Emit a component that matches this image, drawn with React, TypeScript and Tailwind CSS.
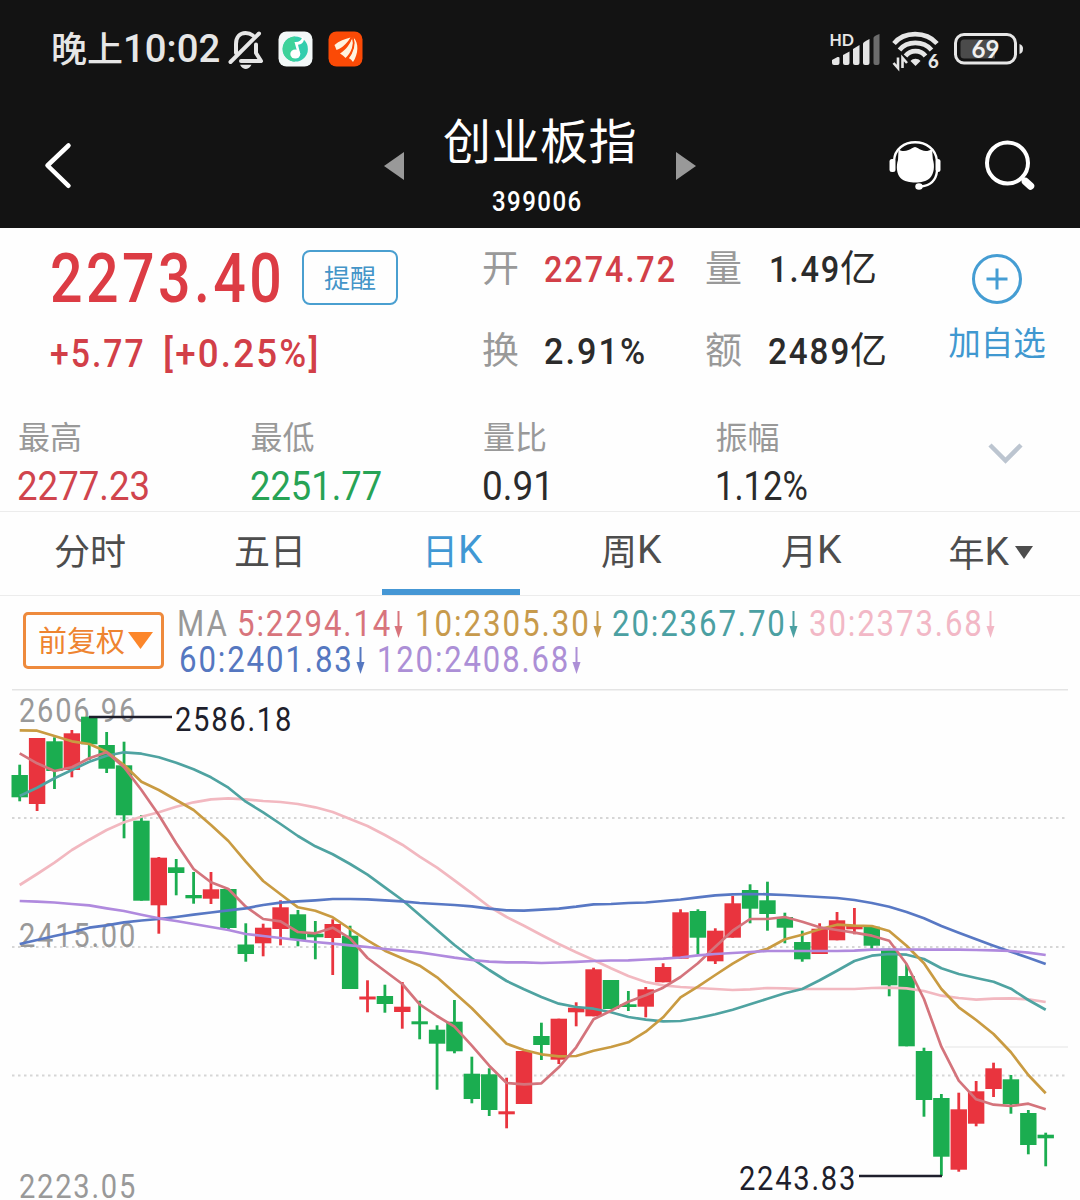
import { useLayoutEffect, useRef, useState } from 'react'
import type { ReactNode } from 'react'

function Fit({ w, className = '', children }: { w: number; className?: string; children: ReactNode }) {
  const ref = useRef<HTMLSpanElement>(null)
  const [scale, setScale] = useState(1)
  useLayoutEffect(() => {
    if (ref.current) setScale(w / ref.current.offsetWidth)
  }, [w])
  return (
    <span className={`block shrink-0 ${className}`} style={{ width: w }}>
      <span ref={ref} className="inline-block origin-left whitespace-pre" style={{ transform: `scaleX(${scale})` }}>
        {children}
      </span>
    </span>
  )
}

const ROBOTO = "font-['Roboto','Noto_Sans_CJK_SC',sans-serif]"
const DIN = "tracking-[0.06em] font-['Roboto','Noto_Sans_CJK_SC',sans-serif]"

function StatusBar() {
  return (
    <div className="flex h-[98px] items-center pl-[51px] text-[#e6e6e6]">
      <Fit w={72} className="mb-[4px] text-[35px] leading-[94px] font-medium">晚上</Fit>
      <Fit w={97} className={`text-[39.500px] leading-[98px] ${ROBOTO} font-medium`}>10:02</Fit>
      <svg className="ml-[8px]" width="36" height="40" viewBox="0 0 36 40" fill="none" stroke="#e6e6e6" strokeWidth="4" strokeLinecap="round" strokeLinejoin="round">
        <path d="M2.500 33 L31 4.500" />
        <path d="M8 24 V15 C8 8 12 4 17.500 4 C20.500 4 23 5 25 6.500" />
        <path d="M28 15.500 V24 L33 32 H13" />
        <path d="M12 35.800 H23.500 C22 39 19.500 40 17.700 40 C16 40 13.500 39 12 35.800 Z" fill="#e6e6e6" stroke="none" />
      </svg>
      <svg className="ml-[14px]" width="35" height="36" viewBox="0 0 35 36">
        <rect x="0.500" y="0.500" width="34" height="35" rx="8" fill="#f3f8f8" />
        <circle cx="17.300" cy="18" r="12.600" fill="#32cdae" />
        <path d="M17 5.500 A12.600 12.600 0 0 0 6 24 C9 28.500 13 30.500 17 30.500 Z" fill="#3dd29a" />
        <ellipse cx="17.300" cy="23" rx="5" ry="4.500" fill="#fff" />
        <path d="M19.800 23 L16.500 11 C20.500 11.500 23.500 9.500 24.500 5.500 L26 8 C25.800 11.500 23.500 13.500 20 13.800 L22.300 23 Z" fill="#fff" />
      </svg>
      <svg className="ml-[15px]" width="35" height="36" viewBox="0 0 35 36">
        <rect x="0.500" y="0.500" width="34" height="35" rx="8" fill="#fb4a06" />
        <path d="M6.500 14 C11 10 17 8 22.500 6.500 C20 11 15 16.500 8.500 19 Z" fill="#fff3df" />
        <path d="M12 22.500 C18 18.500 22.500 13 24 6.500 C26.500 14 23 22 17.500 27 C16 25.500 14 23.500 12 22.500 Z" fill="#fff3df" />
        <path d="M20.500 27 C25 21 27.500 13.500 25.500 6.500 C31 12 30.500 23 25 31 C24 29.500 22.500 28 20.500 27 Z" fill="#fff3df" />
        <path d="M9 21 C16 17.800 21 12.500 23.500 7 M19.500 28 C25 21 27 13.500 25 7" stroke="#fb4a06" strokeWidth="1.500" fill="none" />
      </svg>
      <svg className="ml-[466px] overflow-visible" width="51" height="38" viewBox="0 0 51 38">
        <text x="0.500" y="15.500" fontFamily="Lato, sans-serif" fontWeight="700" fontSize="17.500" textLength="24.500" lengthAdjust="spacingAndGlyphs" fill="#e6e6e6">HD</text>
        <g fill="#e6e6e6">
          <path d="M3 30 L8.500 27 Q10.500 26.500 10.500 28 V33 Q10.500 35 8.500 35 H5 Q3 35 3 33 Z" />
          <path d="M14 25 L20.500 21.500 V33 Q20.500 35 18.500 35 H16 Q14 35 14 33 Z" />
          <path d="M24 19 L30.500 15 V33 Q30.500 35 28.500 35 H26 Q24 35 24 33 Z" />
          <path d="M34 13.500 Q34 12 40.500 9 V33 Q40.500 35 38.500 35 H36 Q34 35 34 33 Z" />
        </g>
        <path d="M44.500 8 Q44.500 6 50.500 4 V33 Q50.500 35 48.500 35 H46.500 Q44.500 35 44.500 33 Z" fill="#6c6c6c" />
      </svg>
      <svg className="ml-[12px] overflow-visible" width="48" height="38" viewBox="0 0 48 38" fill="none" stroke="#e6e6e6" strokeWidth="4.600">
        <path d="M2 13.500 C12 1 34 1 45 13.500" />
        <path d="M7.500 20 C15 10.500 31.500 10.500 39.500 20" />
        <path d="M13.500 26 C18.500 19.500 28.500 19.500 33.500 26" />
        <path d="M18.500 31 C21 28 26 28 28.500 31 L23.500 36 Z" fill="#e6e6e6" stroke="none" />
        <path d="M6 27.500 V38 L1.500 33 M10.500 38 V28 L15 33" strokeWidth="2.600" />
        <text x="36" y="38" fontFamily="Lato, sans-serif" fontWeight="900" fontSize="18.500" fill="#e6e6e6" stroke="none">6</text>
      </svg>
      <svg className="ml-[14px]" width="72" height="32" viewBox="0 0 72 32">
        <rect x="1.500" y="1.500" width="60" height="28.500" rx="8.500" fill="none" stroke="#e6e6e6" strokeWidth="3" />
        <path d="M10 6.500 H41 V25.500 H10 Q6.500 25.500 6.500 22 V10 Q6.500 6.500 10 6.500 Z" fill="#4b4b4b" />
        <path d="M65.500 11 Q69 12 69 15.500 Q69 20 65.500 21 Z" fill="#e6e6e6" />
        <text x="17.500" y="24.500" fontFamily="Lato, sans-serif" fontWeight="700" fontSize="24" textLength="28" lengthAdjust="spacingAndGlyphs" fill="#f0f0f0">69</text>
      </svg>
    </div>
  )
}

function TitleBar() {
  return (
    <div className="flex h-[130px] items-start text-white">
      <svg className="mt-[43px] ml-[43px]" width="30" height="50" viewBox="0 0 30 50" fill="none" stroke="#fff" strokeWidth="4.500" strokeLinecap="round" strokeLinejoin="round">
        <path d="M25.500 4.500 L4.500 24.500 L25.500 44.800" />
      </svg>
      <svg className="mt-[54px] ml-[311px]" width="20" height="28" viewBox="0 0 20 28"><path d="M0 14 L20 0 V28 Z" fill="#999" /></svg>
      <div className="ml-[38px] flex w-[196px] flex-col items-center">
        <h1 className="mt-[7px] h-[75px] text-[48px] leading-[66px] font-normal tracking-[0.5px] whitespace-nowrap">创业板指</h1>
        <Fit w={91} className={`mr-[5px] text-[28px] leading-[44px] font-medium ${DIN}`}>399006</Fit>
      </div>
      <svg className="mt-[54px] ml-[38px]" width="20" height="28" viewBox="0 0 20 28"><path d="M20 14 L0 0 V28 Z" fill="#999" /></svg>
      <svg className="mt-[41px] ml-[192px]" width="54" height="54" viewBox="0 0 54 54">
        <path d="M6 22 C7 -3 47 -3 49 22" fill="none" stroke="#fff" strokeWidth="2.400" />
        <path d="M49 32 C48 42 42 46.500 33 47.500" fill="none" stroke="#fff" strokeWidth="2.400" />
        <rect x="1.500" y="20" width="6" height="13" rx="2.500" fill="#fff" />
        <rect x="47.500" y="20" width="5" height="13" rx="2.500" fill="#fff" />
        <ellipse cx="31" cy="47.500" rx="3.700" ry="3.200" fill="#fff" />
        <path d="M10.500 10.500 C14 12.500 17 12.500 20.500 11 C23 10.500 25 8 27 8 C29 8 31 10.500 33.500 11 C37 12.500 40 12.500 44 10 L44.800 20 C47 27 46 35 42 39 C38 42.500 33 43.500 27.500 43.500 C22 43.500 16 42.500 12.500 39 C8.500 34.500 8 27 10 21 Z" fill="#fff" />
      </svg>
      <svg className="mt-[41px] ml-[41px]" width="54" height="54" viewBox="0 0 54 54" fill="none" stroke="#fff">
        <circle cx="24.500" cy="24" r="20.500" strokeWidth="4" />
        <path d="M39 39 L42 42" strokeWidth="4" />
        <path d="M42.500 42.500 L47.500 47" strokeWidth="7.500" strokeLinecap="round" />
      </svg>
    </div>
  )
}

function QuotePair({ label, children }: { label: string; children: ReactNode }) {
  return (
    <div className="flex h-[82px] items-center text-[#2b2b2b]">
      <span className="mb-[4px] w-[62px] text-[37px] text-[#999]">{label}</span>
      {children}
    </div>
  )
}

function Quote() {
  return (
    <div className="flex h-[170px]">
      <div className="w-[482px] pl-[50px] text-[#dc3c44]">
        <div className="flex h-[102px] items-center">
          <Fit w={235} className={`text-[69px] leading-[102px] font-medium ${DIN}`}>2273.40</Fit>
          <div className="mb-[4px] ml-[17px] flex h-[55px] w-[96px] items-center justify-center rounded-[8px] border-[2.5px] border-[#4a9fd0] pb-[2px] text-[26px] text-[#4495c8]">
            提醒
          </div>
        </div>
        <div className={`flex h-[46px] items-center pt-[2px] text-[39px] leading-[46px] font-medium text-[#d23f48] ${DIN}`}>
          <Fit w={96}>+5.77</Fit>
          <Fit w={158} className="ml-[17px]">[+0.25%]</Fit>
        </div>
      </div>
      <div className="w-[223px]">
        <QuotePair label="开"><Fit w={133} className={`text-[37.500px] font-medium text-[#d23f48] ${DIN}`}>2274.72</Fit></QuotePair>
        <QuotePair label="换"><Fit w={103} className={`text-[37.500px] font-medium ${DIN}`}>2.91%</Fit></QuotePair>
      </div>
      <div className="w-[242px]">
        <QuotePair label="量">
          <Fit w={72} className={`pl-[2px] text-[37.500px] font-medium ${DIN}`}>1.49</Fit>
          <span className="mb-[4px] ml-[1px] text-[37px]">亿</span>
        </QuotePair>
        <QuotePair label="额">
          <Fit w={83} className={`pl-px text-[37.500px] font-medium ${DIN}`}>2489</Fit>
          <span className="mb-[4px] text-[37px]">亿</span>
        </QuotePair>
      </div>
      <div className="flex w-[100px] flex-col items-center pt-[25px] text-[#4098d0]">
        <svg width="52" height="52" viewBox="0 0 52 52" fill="none" stroke="#459dd3" strokeWidth="3">
          <circle cx="26" cy="26" r="23.500" />
          <path d="M26 15.500 V36.500 M15.500 26 H36.500" />
        </svg>
        <span className="mt-[13px] text-[32.500px] leading-[46px] whitespace-nowrap">加自选</span>
      </div>
    </div>
  )
}

const STATS = [
  { label: '最高', value: '2277.23', w: 133, tone: 'text-[#d0444d]' },
  { label: '最低', value: '2251.77', w: 132, tone: 'text-[#27a355]' },
  { label: '量比', value: '0.91', w: 72, tone: 'text-[#2b2b2b]' },
  { label: '振幅', value: '1.12%', w: 93, tone: 'text-[#2b2b2b]' },
]

function Stats() {
  return (
    <div className="flex h-[113px] pt-[12px] pl-[17px]">
      {STATS.map((s) => (
        <div key={s.label} className="w-[232.500px]">
          <div className="h-[50px] pl-px text-[32px] leading-[50px] text-[#999]">{s.label}</div>
          <Fit w={s.w} className={`text-[41px] leading-[52px] ${ROBOTO} ${s.tone}`}>{s.value}</Fit>
        </div>
      ))}
      <svg className="mt-[33px] ml-[41px]" width="36" height="22" viewBox="0 0 36 22" fill="none" stroke="#bcc5d0" strokeWidth="4.500">
        <path d="M2 2 L17.500 17.500 L33 2" />
      </svg>
    </div>
  )
}

function Tabs() {
  const k = <Fit w={24} className={`pt-[3px] text-[39px] ${ROBOTO}`}>K</Fit>
  const base = 'relative flex w-[180px] items-center justify-center pb-[9px] text-[36px]'
  return (
    <div className="flex h-[85px] border-y border-[#ececec] text-[#4d4d4d]">
      <div className={base}>分时</div>
      <div className={base}>五日</div>
      <div className={`${base} pl-[4px] text-[#4098d4]`}>
        日{k}
        <div className="absolute bottom-0 left-[21.500px] h-[6px] w-[138px] bg-[#4597d5]" />
      </div>
      <div className={`${base} pl-[2px]`}>周{k}</div>
      <div className={`${base} pl-[2px]`}>月{k}</div>
      <div className="flex w-[180px] items-center justify-center pb-[5px] pl-px text-[36px]">
        年{k}
        <svg className="mt-[3px] ml-[6px]" width="18" height="13" viewBox="0 0 18 13"><path d="M0 0 H18 L9 13 Z" fill="#4d4d4d" /></svg>
      </div>
    </div>
  )
}

function Average({ text, w, tone, gap }: { text: string; w: number; tone: string; gap: string }) {
  return (
    <div className={`flex items-center ${tone} ${gap}`}>
      <Fit w={w}>{text}</Fit>
      <svg className="ml-[2px]" width="9" height="27" viewBox="0 0 9 27">
        <path d="M4.500 0 V18" stroke="currentColor" strokeWidth="2" />
        <path d="M0.500 15 H8.500 L4.500 27 Z" fill="currentColor" />
      </svg>
    </div>
  )
}

function AverageBar() {
  return (
    <div className="flex h-[93px] pl-[23px]">
      <div className="mt-[16px] flex h-[57px] w-[141px] items-center rounded-[5px] border-[3px] border-[#ee8a3c] pb-px pl-[12px] text-[29px] text-[#ee8430]">
        前复权
        <svg className="ml-[3px]" width="25" height="17" viewBox="0 0 25 17"><path d="M0 0 H25 L12.500 17 Z" fill="#fc862a" /></svg>
      </div>
      <div className={`ml-[13px] pt-[10px] text-[36px] leading-[36px] ${DIN}`}>
        <div className="flex h-[36px]">
          <Fit w={52} className="text-[#999]">MA</Fit>
          <Average text="5:2294.14" w={155} tone="text-[#d8747c]" gap="ml-[8px]" />
          <Average text="10:2305.30" w={176} tone="text-[#c79a4c]" gap="ml-[12px]" />
          <Average text="20:2367.70" w={175} tone="text-[#4ba0a2]" gap="ml-[10px]" />
          <Average text="30:2373.68" w={175} tone="text-[#f2b8c6]" gap="ml-[11px]" />
        </div>
        <div className="flex h-[36px]">
          <Average text="60:2401.83" w={175} tone="text-[#5577c0]" gap="ml-[2px]" />
          <Average text="120:2408.68" w={193} tone="text-[#ac8fd6]" gap="ml-[12px]" />
        </div>
      </div>
    </div>
  )
}

/* [rising, body top, body bottom, high, low] in chart pixels */
const CANDLES: [number, number, number, number, number][] = [
  [0, 775, 797.3, 764.7, 801.3], [1, 738, 804, 738, 811], [0, 741.3, 771, 737.3, 789], [1, 733.3, 770, 730, 777.3],
  [0, 716.7, 744.3, 716.7, 760], [0, 745, 768.7, 732, 773], [0, 765.3, 815.3, 741.7, 838.3], [0, 820.7, 900.7, 815, 900.7],
  [1, 857.7, 905.3, 857, 933.7], [0, 867.3, 873, 859, 895.3], [0, 895, 898.3, 872, 903.7], [1, 889.3, 898.7, 872, 904],
  [0, 889, 928, 889, 930], [0, 944.5, 954, 923.3, 961.7], [1, 927.7, 943.3, 923.7, 956.3], [1, 907.3, 929, 900.3, 945.3],
  [0, 914.3, 940, 910, 946.3], [0, 933.7, 937.3, 921, 959.3], [1, 924, 938, 919.3, 975], [0, 935.7, 989, 925.7, 989],
  [1, 996.5, 999.5, 980.3, 1012.3], [0, 996, 1004, 984.7, 1012.7], [1, 1006.7, 1012, 982, 1028.7], [0, 1021.3, 1024.3, 1000.7, 1039.3],
  [0, 1029.7, 1043.7, 1025.3, 1089.7], [0, 1021.7, 1051.3, 1000, 1053.3], [0, 1073.7, 1099, 1056.7, 1103.3], [0, 1074.3, 1110, 1068.3, 1116],
  [1, 1111.3, 1114.3, 1077.7, 1128.3], [1, 1051, 1104, 1051, 1104], [0, 1036, 1045, 1022.7, 1060], [1, 1018.7, 1059.7, 1018.7, 1064],
  [1, 1007.7, 1012.3, 1002.3, 1026.3], [1, 969.3, 1016.3, 967.7, 1016.3], [0, 980, 1009, 980, 1009], [0, 1004.3, 1007, 991, 1011],
  [1, 989.3, 1006.7, 987, 1017.3], [1, 967, 982.3, 963.3, 982.3], [1, 912.3, 958.7, 909.3, 958.7], [0, 911, 937.7, 909.3, 954.3],
  [1, 930.7, 961.3, 928.3, 964], [1, 903.3, 937.7, 896, 937.7], [0, 890, 908.7, 884.3, 923.3], [0, 900.3, 914, 881.7, 930.7],
  [0, 917, 927.7, 912.7, 943.3], [0, 942, 959.3, 930.7, 961.7], [1, 928.7, 954, 923.3, 954], [1, 920.3, 940.3, 912, 940.3],
  [1, 925.3, 929.3, 908, 934.3], [0, 926.7, 945.7, 925, 948.7], [0, 948.7, 985.3, 948.7, 996.3], [0, 976, 1046.3, 964, 1046.3],
  [0, 1051, 1100, 1047.7, 1116.7], [0, 1098, 1156.7, 1094, 1176], [1, 1109.3, 1169.7, 1092.7, 1171.7], [1, 1091.3, 1123.7, 1081, 1126.3],
  [1, 1068.3, 1089, 1062.7, 1097], [0, 1079.3, 1104.3, 1075, 1113.7], [0, 1113, 1145, 1110, 1154.3], [0, 1134.7, 1138.3, 1132.7, 1166.3],
]

const LINES = [
  { color: '#f2b8c0', ys: [885, 874, 862.7, 850, 839.7, 830, 822.3, 816.7, 812.3, 806.7, 802.3, 799.3, 798.3, 799.3, 801, 802, 804, 807.3, 812, 819, 826, 835, 844.7, 856.7, 867.7, 880.3, 893.3, 906.7, 917, 925.7, 935, 944, 952.3, 960, 968.3, 976, 982, 985.3, 987, 988, 989, 990, 989.3, 988, 988.3, 989, 989, 989, 989, 988, 987.7, 988.3, 991, 995.7, 998, 999.7, 998.7, 998.3, 999.3, 1002] },
  { color: '#4fa3a1', ys: [796, 787.7, 778.3, 770, 761.7, 755.7, 752.3, 753.7, 757.3, 762.7, 769.3, 777.3, 787.7, 801.7, 812.3, 824, 836, 846.3, 854.3, 864, 874.7, 887.3, 900, 915, 930, 945, 958.3, 970, 981, 989.3, 997, 1003.7, 1007, 1008.7, 1012.3, 1017, 1019.7, 1021.3, 1021, 1018, 1014.3, 1009.7, 1004.3, 998.7, 993.3, 989, 980.3, 970.7, 961, 955.7, 954, 954.7, 959, 968.3, 974, 978, 981.7, 988.7, 1000, 1009.7] },
  { color: '#c99b42', ys: [730.3, 730.7, 736, 741.3, 744, 751.7, 765, 781.7, 790, 800, 810, 825, 841, 861.7, 881, 894.3, 907.3, 910.7, 917.3, 929, 940.3, 950.7, 958.3, 965.7, 977.3, 992.7, 1008.3, 1026, 1043.7, 1050, 1054.3, 1056.3, 1056, 1050.7, 1047, 1042.3, 1031.7, 1017.3, 997.3, 986.7, 975, 963.7, 953.7, 948.7, 939.3, 934.7, 929.3, 924.7, 925.7, 926, 931, 945.7, 963.3, 989, 1007.3, 1020, 1034, 1052.3, 1075, 1093.3] },
  { color: '#d4747c', ys: [753.3, 763.3, 771, 767.3, 758.3, 752.3, 767.3, 790, 815, 843.3, 869, 882.3, 889, 906.7, 919, 921.3, 932, 933.3, 927.7, 938.3, 958, 971, 984, 1004.3, 1016, 1026.7, 1045.7, 1065.7, 1083, 1084.3, 1083.3, 1067.3, 1047.3, 1019.3, 1010.7, 1001.7, 995.3, 987.7, 977, 963.3, 946.7, 930.7, 919, 919, 917, 921.7, 927.3, 930, 932.7, 935.7, 940.7, 964, 999, 1046.7, 1080.7, 1099.3, 1104.7, 1106, 1103.7, 1109.3] },
  { color: '#5878c4', ys: [944, 940, 936, 932.3, 927.7, 925.3, 922.3, 920.5, 919, 917, 914.7, 912.5, 910.3, 908.3, 905, 902.7, 901.3, 900.3, 899, 899, 899.3, 900.3, 901.3, 903, 904, 905, 906.3, 908.7, 910.3, 910.7, 909.7, 908.7, 906.7, 904.3, 904, 903, 902.5, 901, 899.5, 897.3, 895.3, 894.3, 894, 894.3, 895, 896, 897, 898, 900, 903, 906.7, 912, 918.3, 926, 932.7, 939.3, 945.7, 951.7, 957.7, 964] },
  { color: '#b08ade', ys: [901, 901.7, 902.5, 904, 905.3, 908.3, 911, 914.7, 918.3, 921, 924, 927, 930, 934, 936, 938, 940, 942, 943.7, 945.3, 947, 949, 950.7, 952.3, 955, 957.7, 960, 961.7, 962.3, 962.3, 963, 962.5, 961.8, 961, 960.5, 960.3, 959.5, 958.7, 957.5, 955.3, 954, 953, 952, 951, 951, 951, 951, 951, 950.7, 949.7, 949.5, 949.5, 949.7, 949.7, 949.7, 950, 950.3, 951, 952.7, 955] },
]

const xAt = (i: number) => 19.7 + i * 17.39

function ChartLabel({ x, y, fill, size = 33, children }: { x: number; y: number; fill: string; size?: number; children: string }) {
  return (
    <text x={x} y={y} fill={fill} fontFamily="Roboto, sans-serif" fontSize={size} letterSpacing="2" textLength={118} lengthAdjust="spacingAndGlyphs">
      {children}
    </text>
  )
}

function Chart() {
  return (
    <svg className="block" width="1080" height="511" viewBox="0 689 1080 511">
      <path d="M12 689.500 H1068" stroke="#e4e4e4" strokeWidth="2" />
      {[818, 947, 1075.5].map((y) => (
        <path key={y} d={`M12 ${y} H1068`} stroke="#d6d6d6" strokeWidth="2" strokeDasharray="2.500 3.500" />
      ))}
      <path d="M945 1047 H1068" stroke="#ededed" strokeWidth="1.500" />
      <ChartLabel x={19} y={722} fill="#999">2606.96</ChartLabel>
      <ChartLabel x={19} y={947} fill="#999">2415.00</ChartLabel>
      <ChartLabel x={19} y={1198} fill="#999">2223.05</ChartLabel>
      {CANDLES.map(([up, top, bottom, high, low], i) => (
        <g key={i} fill={up ? '#e9343e' : '#1bad50'}>
          <rect x={xAt(i) - 1.4} y={high} width="2.800" height={low - high} />
          <rect x={xAt(i) - 8.2} y={top} width="16.400" height={bottom - top} />
        </g>
      ))}
      {LINES.map((l) => (
        <polyline key={l.color} points={l.ys.map((y, i) => `${xAt(i)},${y}`).join(' ')} fill="none" stroke={l.color} strokeWidth="2.700" strokeLinejoin="round" />
      ))}
      <path d="M89 717 H172 M859 1176 H942" stroke="#1e1f2c" strokeWidth="2.500" />
      <ChartLabel x={175} y={731} fill="#1e1f2c" size={34}>2586.18</ChartLabel>
      <ChartLabel x={739} y={1190} fill="#1e1f2c" size={34}>2243.83</ChartLabel>
    </svg>
  )
}

export default function App() {
  return (
    <div className="h-[1200px] w-[1080px] overflow-hidden bg-[#fefefe] font-['Noto_Sans_CJK_SC',sans-serif]">
      <header className="h-[228px] bg-[#131313]">
        <StatusBar />
        <TitleBar />
      </header>
      <Quote />
      <Stats />
      <Tabs />
      <AverageBar />
      <Chart />
    </div>
  )
}
